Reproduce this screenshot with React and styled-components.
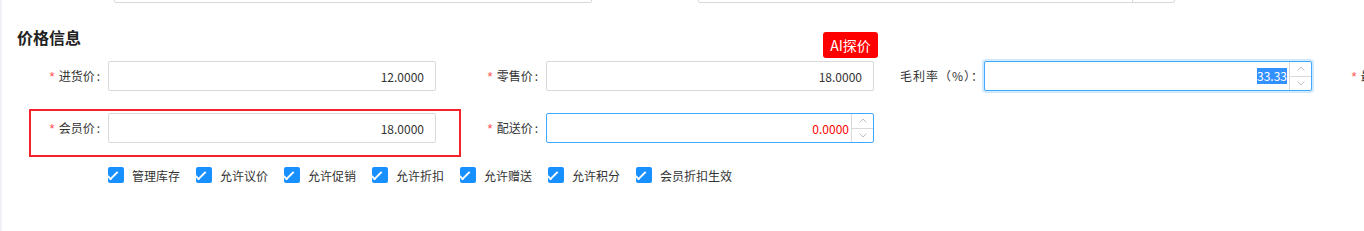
import React from "react";
import styled, { createGlobalStyle } from "styled-components";

const GlobalStyle = createGlobalStyle`
  html, body {
    margin: 0;
    padding: 0;
    background: #fff;
    overflow: hidden;
  }
  body {
    font-family: "Noto Sans CJK SC", "Noto Sans", sans-serif;
    font-size: 12px;
    color: #333;
  }
`;

const Page = styled.div`
  width: 1364px;
  height: 231px;
  box-sizing: border-box;
  border-left: 2px solid #f0f0f5;
  overflow: hidden;
  position: relative;
`;

const PrevRow = styled.div`
  height: 3px;
  overflow: hidden;
  display: flex;
  align-items: flex-end;
`;

const PrevInput = styled.div`
  flex: none;
  width: ${(p) => p.$width}px;
  height: 30px;
  margin-left: ${(p) => p.$offset}px;
  box-sizing: border-box;
  border: 1px solid #d9d9d9;
  border-radius: 2px;
  display: flex;
  justify-content: flex-end;
`;

const PrevAddon = styled.div`
  width: 41px;
  border-left: 1px solid #d9d9d9;
`;

const Title = styled.h3`
  margin: 22px 0 0 15px;
  font-size: 16px;
  line-height: 24px;
  font-weight: 700;
  color: #222;
`;

const Form = styled.div`
  margin-top: 12px;
  padding-left: 6px;
  display: flex;
  flex-direction: column;
  gap: 22px;
`;

const Row = styled.div`
  display: flex;
  white-space: nowrap;
`;

const Field = styled.div`
  flex: none;
  width: 438px;
  height: 30px;
  display: flex;
  align-items: center;
  position: relative;
`;

const Label = styled.label`
  flex: none;
  width: 100px;
  box-sizing: border-box;
  text-align: right;
  letter-spacing: ${(p) => (p.$wide ? 1 : 0)}px;
  color: #333;
  font-size: 12px;
  line-height: 30px;
`;

const Star = styled.span`
  color: #ff4d4f;
  margin-right: 4px;
  font-family: "Liberation Sans", sans-serif;
  font-size: 13px;
`;

const Colon = styled.span`
  margin: 0 8px 0 2px;
`;

const InputBox = styled.div`
  flex: none;
  width: 328px;
  height: 30px;
  box-sizing: border-box;
  border: 1px solid ${(p) => (p.$active ? "#40a9ff" : "#d9d9d9")};
  border-radius: 2px;
  box-shadow: ${(p) => (p.$focus ? "0 0 0 2px rgba(24,144,255,0.2)" : "none")};
  display: flex;
  align-items: stretch;
  background: #fff;
`;

const Value = styled.div`
  flex: 1;
  display: flex;
  align-items: center;
  justify-content: flex-end;
  padding-right: ${(p) => (p.$spin ? 2 : 11)}px;
  font-size: 12px;
  color: ${(p) => (p.$red ? "#ff0000" : "#333")};
`;

const Selected = styled.span`
  background: #3390ff;
  color: #fff;
  line-height: 16px;
`;

const Spinner = styled.div`
  flex: none;
  width: 21px;
  border-left: 1px solid #d9d9d9;
  display: flex;
  flex-direction: column;
`;

const SpinHalf = styled.div`
  flex: 1;
  display: flex;
  align-items: center;
  justify-content: center;
  color: #bfbfbf;
  & + & {
    border-top: 1px solid #d9d9d9;
  }
`;

const AiButton = styled.button`
  position: absolute;
  top: -29px;
  left: 377px;
  width: 55px;
  height: 26px;
  padding: 0;
  border: none;
  border-radius: 3px;
  background: #ff0000;
  color: #fff;
  font-family: "Noto Sans CJK SC", sans-serif;
  font-size: 14px;
  line-height: 26px;
`;

const Highlight = styled.div`
  position: absolute;
  left: 21px;
  top: -4px;
  width: 432px;
  height: 48px;
  box-sizing: border-box;
  border: 2px solid #f5222d;
  pointer-events: none;
`;

const Checks = styled.div`
  margin: 24px 0 0 106px;
  display: flex;
  gap: 16px;
`;

const CheckItem = styled.label`
  display: flex;
  align-items: center;
  gap: 8px;
  height: 16px;
  font-size: 12px;
  color: #333;
`;

const Box = styled.span`
  width: 16px;
  height: 16px;
  box-sizing: border-box;
  border-radius: 2px;
  background: #1890ff;
  position: relative;
  &::after {
    content: "";
    position: absolute;
    left: 4px;
    top: 7px;
    width: 5px;
    height: 9px;
    border: 2px solid #fff;
    border-top: 0;
    border-left: 0;
    transform: rotate(45deg) translate(-50%, -50%);
    transform-origin: 0 0;
  }
`;

const Chevron = ({ up }) => (
  <svg width="8" height="5" viewBox="0 0 8 5">
    <path
      d={up ? "M0.5 4.5 L4 1 L7.5 4.5" : "M0.5 0.5 L4 4 L7.5 0.5"}
      fill="none"
      stroke="currentColor"
      strokeWidth="1"
    />
  </svg>
);

const NumberInput = ({ value, red, active, focus, selected }) => (
  <InputBox $active={active} $focus={focus}>
    <Value $spin $red={red}>
      {selected ? <Selected>{value}</Selected> : value}
    </Value>
    <Spinner>
      <SpinHalf>
        <Chevron up />
      </SpinHalf>
      <SpinHalf>
        <Chevron />
      </SpinHalf>
    </Spinner>
  </InputBox>
);

const TextInput = ({ value }) => (
  <InputBox>
    <Value>{value}</Value>
  </InputBox>
);

const FieldLabel = ({ required, wide, children }) => (
  <Label $wide={wide}>
    {required && <Star>*</Star>}
    {children}
    {required && <Colon>:</Colon>}
  </Label>
);

const options = ["管理库存", "允许议价", "允许促销", "允许折扣", "允许赠送", "允许积分", "会员折扣生效"];

export default function App() {
  return (
    <Page>
      <GlobalStyle />
      <PrevRow>
        <PrevInput $width={478} $offset={112} />
        <PrevInput $width={477} $offset={106}>
          <PrevAddon />
        </PrevInput>
      </PrevRow>
      <Title>价格信息</Title>
      <Form>
        <Row>
          <Field>
            <FieldLabel required>进货价</FieldLabel>
            <TextInput value="12.0000" />
          </Field>
          <Field>
            <AiButton>AI探价</AiButton>
            <FieldLabel required>零售价</FieldLabel>
            <TextInput value="18.0000" />
          </Field>
          <Field>
            <FieldLabel wide>毛利率（%）：</FieldLabel>
            <NumberInput value="33.33" active focus selected />
          </Field>
          <Field>
            <FieldLabel required>最低售价</FieldLabel>
            <TextInput value="" />
          </Field>
        </Row>
        <Row>
          <Field>
            <Highlight />
            <FieldLabel required>会员价</FieldLabel>
            <TextInput value="18.0000" />
          </Field>
          <Field>
            <FieldLabel required>配送价</FieldLabel>
            <NumberInput value="0.0000" red active />
          </Field>
        </Row>
      </Form>
      <Checks>
        {options.map((o) => (
          <CheckItem key={o}>
            <Box />
            {o}
          </CheckItem>
        ))}
      </Checks>
    </Page>
  );
}
